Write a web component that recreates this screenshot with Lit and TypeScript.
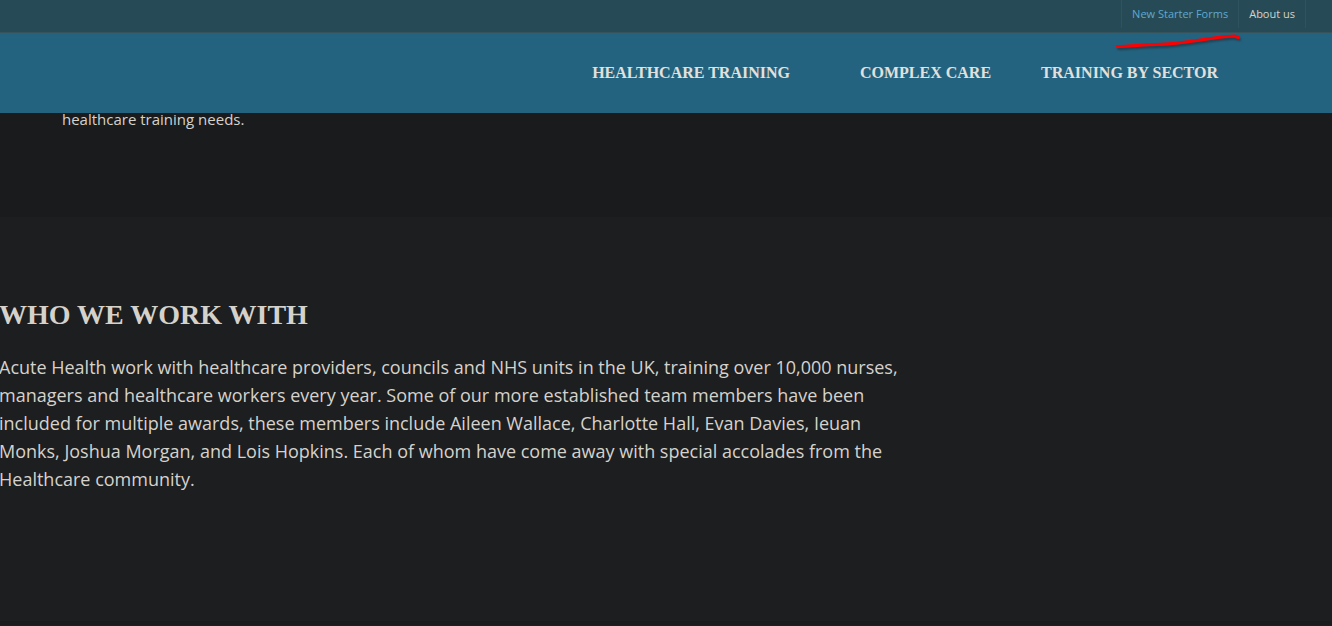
import { LitElement, html, css } from "lit";
import { customElement } from "lit/decorators.js";

@customElement("app-root")
export class AppRoot extends LitElement {
  static styles = css`
    :host {
      display: block;
      min-height: 100vh;
      overflow-x: clip;
      background: #1d1e20;
      color: #d5d2cc;
      font-family: "Open Sans", sans-serif;
    }
    a {
      color: inherit;
      text-decoration: none;
    }
    header {
      position: sticky;
      top: 0;
      z-index: 1;
    }
    .top {
      position: relative;
      display: flex;
      justify-content: flex-end;
      height: 32px;
      padding-right: 26px;
      background: #274b56;
      border-bottom: 1px solid #36535b;
      font-size: 11px;
      line-height: 28px;
    }
    .top a {
      height: 28px;
      padding: 0 10px;
      border-right: 1px solid #2f535e;
    }
    .top a:first-child {
      border-left: 1px solid #2f535e;
      color: #5ea9cf;
    }
    .mark {
      position: absolute;
      top: 30px;
      right: 88px;
      width: 132px;
      height: 24px;
      pointer-events: none;
      fill: none;
      stroke: #fe0002;
      stroke-width: 3;
      stroke-linecap: round;
      stroke-linejoin: round;
      filter: drop-shadow(1px 2px 1px rgb(30 40 50 / 60%));
    }
    .main {
      display: flex;
      justify-content: flex-end;
      align-items: center;
      height: 80px;
      padding-right: 114px;
      background: #24637f;
      font: bold 16px/24px "Liberation Serif", serif;
      color: #e2e0dc;
    }
    .main a + a {
      margin-left: 50px;
    }
    .main a.wide {
      margin-left: 70px;
    }
    .intro {
      display: flow-root;
      min-height: 104px;
      background: #1a1b1d;
      font-size: 15px;
      line-height: 26px;
    }
    .intro p {
      margin: -7px 62px 0;
    }
    .who {
      margin-left: -1px;
      padding: 80px 0 128px;
    }
    h2 {
      margin: 0;
      font: bold 28px/36px "Liberation Serif", serif;
    }
    .who p {
      max-width: 900px;
      margin: 20px 0 0;
      font-size: 18px;
      line-height: 28px;
    }
    .end {
      height: 4px;
      background: #1a1b1d;
    }
  `;

  render() {
    return html`
      <header>
        <nav class="top" aria-label="Secondary">
          <a href="#forms">New Starter Forms</a>
          <a href="#about">About us</a>
          <svg class="mark" viewBox="0 0 132 24" aria-hidden="true">
            <path d="M5.500 16.500C20 16 32 14.800 44 14.500C76 14 94 7.500 122 6L126.500 7.500" />
          </svg>
        </nav>
        <nav class="main" aria-label="Primary">
          <a href="#healthcare">HEALTHCARE TRAINING</a>
          <a class="wide" href="#complex">COMPLEX CARE</a>
          <a href="#sector">TRAINING BY SECTOR</a>
        </nav>
      </header>
      <main>
        <section class="intro"><p>healthcare training needs.</p></section>
        <section class="who">
          <h2>WHO WE WORK WITH</h2>
          <p>
            Acute Health work with healthcare providers, councils and NHS units in the UK, training over 10,000 nurses,
            managers and healthcare workers every year. Some of our more established team members have been included for
            multiple awards, these members include Aileen Wallace, Charlotte Hall, Evan Davies, Ieuan Monks, Joshua
            Morgan, and Lois Hopkins. Each of whom have come away with special accolades from the Healthcare community.
          </p>
        </section>
        <div class="end"></div>
      </main>
    `;
  }
}
